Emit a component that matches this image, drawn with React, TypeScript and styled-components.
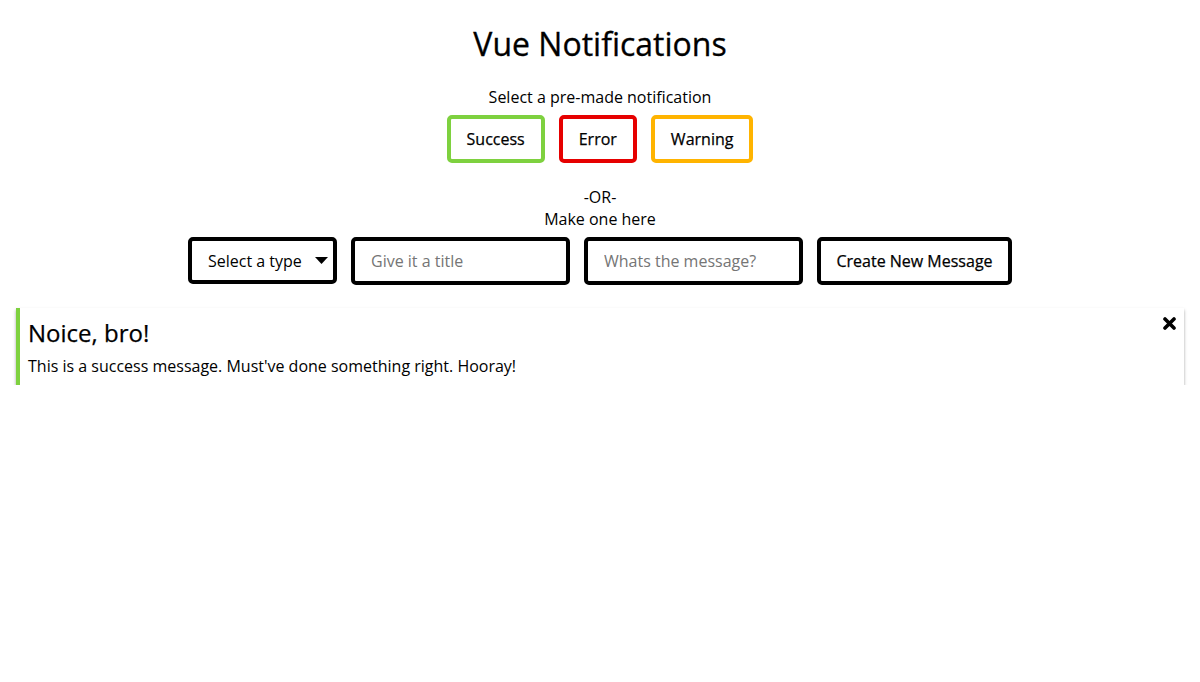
import React, { useState } from "react";
import styled, { createGlobalStyle } from "styled-components";

const GlobalStyle = createGlobalStyle`
  html, body {
    margin: 0;
    padding: 0;
    background: #fff;
  }
  body {
    font-family: "Open Sans", "Noto Sans", sans-serif;
    color: #000;
  }
  * {
    box-sizing: border-box;
  }
`;

const Page = styled.div`
  padding: 22px 16px 0;
  text-align: center;
`;

const Title = styled.h1`
  margin: 0;
  font-size: 32px;
  line-height: 44px;
  font-weight: 400;
  -webkit-text-stroke: 0.3px #000;
`;

const Label = styled.div<{ $top?: number }>`
  margin-top: ${(p) => p.$top ?? 0}px;
  font-size: 16px;
  line-height: 22px;
`;

const PresetRow = styled.div`
  display: flex;
  justify-content: center;
  gap: 14px;
  margin: 7px 0 23px;
`;

const PresetButton = styled.button<{ $color: string }>`
  height: 48px;
  padding: 0 16px;
  border: 4px solid ${(p) => p.$color};
  border-radius: 5px;
  background: #fff;
  font-family: inherit;
  font-size: 16px;
  font-weight: 400;
  -webkit-text-stroke: 0.25px #000;
  color: #000;
  cursor: pointer;
`;

const FormRow = styled.div`
  display: flex;
  justify-content: center;
  gap: 14px;
  margin-top: 7px;
`;

const SelectWrap = styled.div`
  position: relative;
  width: 149px;
  height: 47px;
`;

const TypeSelect = styled.select`
  appearance: none;
  width: 100%;
  height: 100%;
  border: 4px solid #000;
  border-radius: 5px;
  background: #fff;
  padding: 0 0 0 16px;
  font-family: inherit;
  font-size: 16px;
  color: #000;
`;

const Caret = styled.svg`
  position: absolute;
  right: 9px;
  top: 20px;
  pointer-events: none;
`;

const TextInput = styled.input`
  width: 219px;
  height: 48px;
  border: 4px solid #000;
  border-radius: 5px;
  padding: 0 16px;
  font-family: inherit;
  font-size: 16px;
  color: #000;

  &::placeholder {
    color: #757575;
  }
`;

const CreateButton = styled.button`
  width: 195px;
  height: 48px;
  border: 4px solid #000;
  border-radius: 5px;
  background: #fff;
  font-family: inherit;
  font-size: 16px;
  font-weight: 400;
  -webkit-text-stroke: 0.25px #000;
  color: #000;
  cursor: pointer;
`;

const Notice = styled.div<{ $color: string }>`
  position: relative;
  margin-top: 23px;
  text-align: left;
  background: #fff;
  border-left: 4px solid ${(p) => p.$color};
  padding: 8px 40px 8px 8px;
  box-shadow: 0 2px 3px rgba(0, 0, 0, 0.35);
`;

const NoticeTitle = styled.h2`
  margin: 0;
  font-size: 24px;
  line-height: 34px;
  font-weight: 400;
  -webkit-text-stroke: 0.25px #000;
`;

const NoticeText = styled.p`
  margin: 5px 0 0;
  font-size: 16px;
  line-height: 22px;
`;

const CloseButton = styled.button`
  position: absolute;
  top: 9px;
  right: 8px;
  border: none;
  background: none;
  padding: 0;
  display: flex;
  cursor: pointer;
`;

const presets = [
  { label: "Success", color: "#7ed13f" },
  { label: "Error", color: "#e60000" },
  { label: "Warning", color: "#ffb400" },
];

export default function App() {
  const [open, setOpen] = useState(true);

  return (
    <Page>
      <GlobalStyle />
      <Title>Vue Notifications</Title>
      <Label $top={20}>Select a pre-made notification</Label>
      <PresetRow>
        {presets.map((p) => (
          <PresetButton key={p.label} $color={p.color}>
            {p.label}
          </PresetButton>
        ))}
      </PresetRow>
      <Label>-OR-</Label>
      <Label>Make one here</Label>
      <FormRow>
        <SelectWrap>
          <TypeSelect defaultValue="">
            <option value="" disabled>
              Select a type
            </option>
            <option value="success">Success</option>
            <option value="error">Error</option>
            <option value="warning">Warning</option>
          </TypeSelect>
          <Caret width="13" height="7" viewBox="0 0 13 7">
            <path d="M0 0h13L6.5 7z" fill="#000" />
          </Caret>
        </SelectWrap>
        <TextInput placeholder="Give it a title" />
        <TextInput placeholder="Whats the message?" />
        <CreateButton>Create New Message</CreateButton>
      </FormRow>
      {open && (
        <Notice $color="#7ed13f">
          <NoticeTitle>Noice, bro!</NoticeTitle>
          <NoticeText>This is a success message. Must've done something right. Hooray!</NoticeText>
          <CloseButton onClick={() => setOpen(false)} aria-label="Close">
            <svg width="13" height="13" viewBox="0 0 13 13">
              <path d="M2 2l9 9M11 2l-9 9" stroke="#000" strokeWidth="3.6" strokeLinecap="round" />
            </svg>
          </CloseButton>
        </Notice>
      )}
    </Page>
  );
}
